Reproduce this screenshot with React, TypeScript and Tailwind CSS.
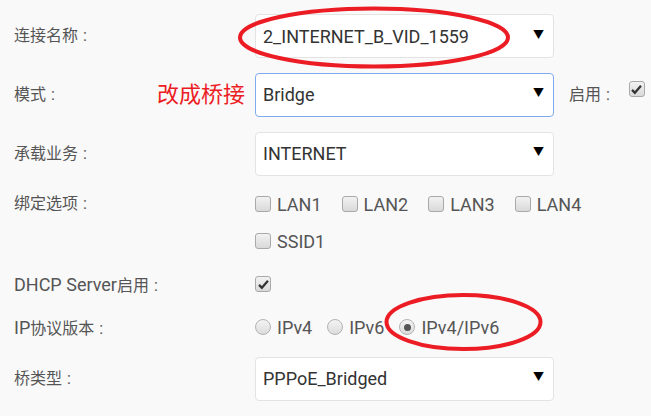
import { ReactNode } from "react"

const font = { fontFamily: 'Roboto, "Noto Sans CJK SC", sans-serif' }

const Box = ({ checked }: { checked?: boolean }) => (
    <span className="relative inline-flex h-4 w-4 shrink-0 items-center justify-center rounded-[3px] border border-[#a9a9a9] bg-gradient-to-b from-[#f2f2f2] to-[#d9d9d9]">
        {checked && (
            <svg viewBox="0 0 16 16" className="h-[13px] w-[13px]">
                <path d="M2.5 8.5 L6 12 L13.5 3.5" fill="none" stroke="#333" strokeWidth="2.8" />
            </svg>
        )}
    </span>
)

const Radio = ({ checked }: { checked?: boolean }) => (
    <span className="inline-flex h-4 w-4 shrink-0 items-center justify-center rounded-full border border-[#b3b3b3] bg-gradient-to-b from-[#f4f4f4] to-[#dcdcdc]">
        {checked && <span className="h-[7px] w-[7px] rounded-full bg-[#555]" />}
    </span>
)

const Select = ({ value, focus }: { value: string, focus?: boolean }) => (
    <div className={`flex h-[44px] w-[299px] items-center justify-between rounded-[4px] border bg-white pl-[7px] pr-[9px] text-[18px] text-[#333] ${focus ? 'border-[#7eaaf0]' : 'border-[#e3e3e3]'}`}>
        <span>{value}</span>
        <span className="text-[11px] text-black">▼</span>
    </div>
)

const Row = ({ label, extra, className, children }: { label?: ReactNode, extra?: ReactNode, className?: string, children: ReactNode }) => (
    <div className={`flex items-center ${className ?? ''}`}>
        <div className="flex w-[255px] shrink-0 items-center justify-between pl-[14px] pr-[10px] text-[16px] text-[#555]">
            <span>
                {label}
                {label && <span className="ml-[5px]">:</span>}
            </span>
            {extra}
        </div>
        {children}
    </div>
)

const Check = ({ label, checked }: { label: string, checked?: boolean }) => (
    <label className="flex items-center gap-[6px] text-[18px] text-[#555]">
        <Box checked={checked} />
        <span>{label}</span>
    </label>
)

export default function App() {
    return (
        <div className="relative h-[416px] w-[651px] overflow-hidden bg-[#f9f9f9] pt-[14px]" style={font}>
            <Row label="连接名称" className="h-[44px]">
                <Select value="2_INTERNET_B_VID_1559" />
            </Row>

            <Row label="模式" className="mt-[14px] h-[45px]" extra={<span className="text-[22px] text-[#ec1c24]">改成桥接</span>}>
                <Select value="Bridge" focus />
                <span className="ml-[15px] text-[16px] text-[#555]">启用<span className="ml-[5px]">:</span></span>
                <span className="ml-[19px] -mt-[8px]"><Box checked /></span>
            </Row>

            <Row label="承载业务" className="mt-[15px] h-[43px]">
                <Select value="INTERNET" />
            </Row>

            <Row label="绑定选项" className="mt-[14px] h-[30px]">
                <div className="flex gap-[20px]">
                    <Check label="LAN1" />
                    <Check label="LAN2" />
                    <Check label="LAN3" />
                    <Check label="LAN4" />
                </div>
            </Row>

            <Row className="mt-[7px] h-[30px]">
                <Check label="SSID1" />
            </Row>

            <Row label={<><span className="text-[18px]">DHCP Server</span>启用</>} className="mt-[13px] h-[30px]">
                <Box checked />
            </Row>

            <Row label={<><span className="text-[18px]">IP</span>协议版本</>} className="mt-[13px] h-[30px]">
                <div className="flex gap-[15px] text-[18px] text-[#555]">
                    <label className="flex items-center gap-[6px]"><Radio /><span>IPv4</span></label>
                    <label className="flex items-center gap-[6px]"><Radio /><span>IPv6</span></label>
                    <label className="flex items-center gap-[6px]"><Radio checked /><span>IPv4/IPv6</span></label>
                </div>
            </Row>

            <Row label="桥类型" className="mt-[15px] h-[43px]">
                <Select value="PPPoE_Bridged" />
            </Row>

            {/* 红色标注圈 */}
            <svg className="pointer-events-none absolute left-0 top-0" width="651" height="416">
                <ellipse cx="374" cy="37.5" rx="134" ry="29" fill="none" stroke="#ec1c24" strokeWidth="4" />
                <ellipse cx="463.5" cy="322" rx="77" ry="27" fill="none" stroke="#ec1c24" strokeWidth="4" />
            </svg>
        </div>
    )
}
